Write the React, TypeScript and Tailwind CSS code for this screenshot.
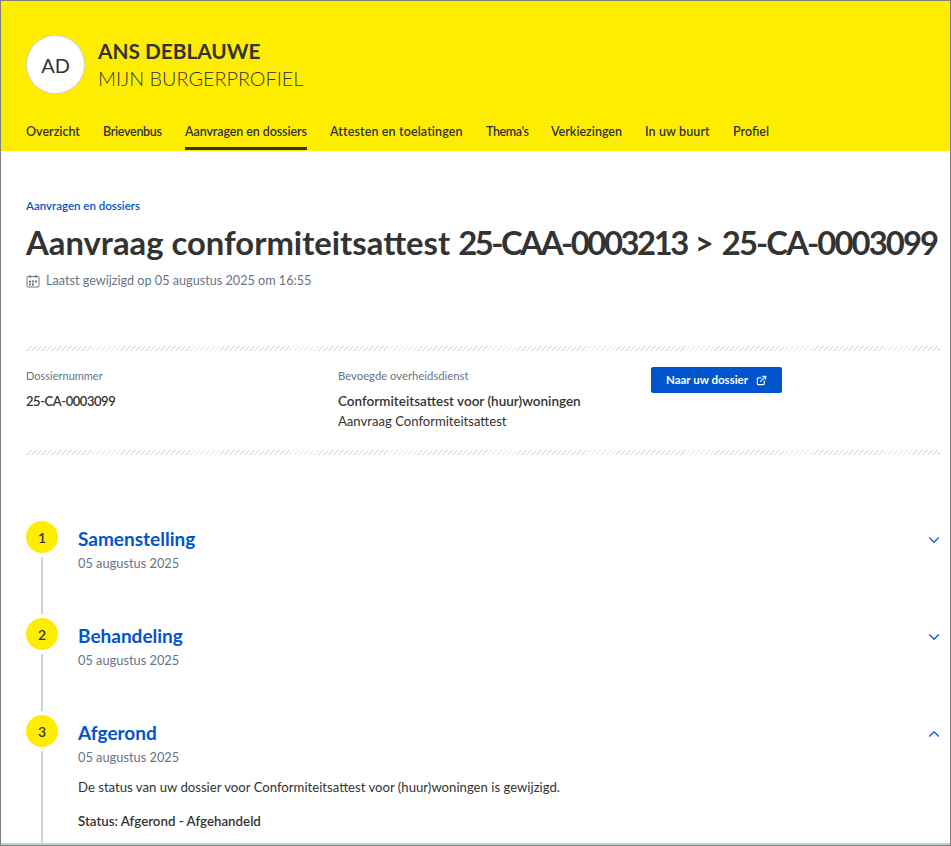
import { ChevronDown, ChevronUp, ExternalLink } from "lucide-react";

const navItems = [
  { label: "Overzicht", style: "w-[54px]" },
  { label: "Brievenbus", style: "w-[59px] tracking-[-0.3px]" },
  { label: "Aanvragen en dossiers", style: "w-[122px] tracking-[-0.1px]", active: true },
  { label: "Attesten en toelatingen", style: "w-[133px] tracking-[0.13px]" },
  { label: "Thema's", style: "w-[42px] tracking-[-0.4px]" },
  { label: "Verkiezingen", style: "w-[71px]" },
  { label: "In uw buurt", style: "w-[65px] tracking-[0.1px]" },
  { label: "Profiel", style: "w-[36px]" },
];

function Hatch() {
  return (
    <div className="h-[5px] bg-[repeating-linear-gradient(135deg,#e0e3e7_0px,#e0e3e7_1.2px,#ffffff_1.2px,#ffffff_3.5px)]" />
  );
}

function CalendarIcon() {
  return (
    <svg width="14" height="14" viewBox="0 0 14 14" fill="none" className="text-[#687483]">
      <rect x="1" y="2.5" width="12" height="10.5" rx="1" stroke="currentColor" />
      <path d="M4 1v3M10 1v3" stroke="currentColor" strokeWidth="1.2" />
      <path d="M3 6.5h2v2H3zM6 6.5h2v2H6zM9 6.5h2v2H9zM3 9.5h2v2H3zM6 9.5h2v2H6z" fill="currentColor" />
    </svg>
  );
}

type StepProps = {
  number: number;
  title: string;
  open?: boolean;
  last?: boolean;
  children?: React.ReactNode;
};

function Step({ number, title, open, last, children }: StepProps) {
  const Chevron = open ? ChevronUp : ChevronDown;
  return (
    <div className={last ? "flex gap-[20px]" : "flex h-[97px] gap-[20px]"}>
      <div className="flex w-[32px] shrink-0 flex-col items-center">
        <div className="flex size-[32px] shrink-0 items-center justify-center rounded-full bg-[#ffed00] text-[14px] font-semibold text-[#333332]">
          {number}
        </div>
        <div className="mt-[4px] mb-[4px] w-[2px] grow bg-[#cbd2da]" />
      </div>
      <div className="min-w-0 grow">
        <div className="flex items-start justify-between">
          <h2 className="mt-[6px] text-[19px] leading-[24px] font-bold text-[#0055cc]">{title}</h2>
          <Chevron className="mt-[10px] mr-[-3px] size-[18px] text-[#0055cc]" strokeWidth={1.5} />
        </div>
        <p className="mt-[3px] text-[12.8px] leading-[18px] text-[#687483]">05 augustus 2025</p>
        {children}
      </div>
    </div>
  );
}

export default function App() {
  return (
    <div className="flex h-[846px] w-[951px] flex-col overflow-hidden border border-[#808080] bg-white font-['Lato',sans-serif] text-[#333332]">
      <header className="h-[150px] shrink-0 bg-[#ffed00] px-[25px]">
        <div className="flex items-center gap-[13px] pt-[34px]">
          <div className="flex size-[59px] items-center justify-center rounded-full border border-[#cbd2da] bg-white text-[20px]">
            AD
          </div>
          <div>
            <div className="text-[20.8px] leading-[28px] font-bold">ANS DEBLAUWE</div>
            <div className="text-[19.8px] leading-[27px] font-light">MIJN BURGERPROFIEL</div>
          </div>
        </div>
        <nav className="mt-[21px] flex gap-[23px]">
          {navItems.map((item) => (
            <a
              key={item.label}
              className={
                item.active
                  ? `${item.style} h-[35px] border-b-[3px] border-[#333332] pt-[8px] text-[12.5px] leading-[18px] font-semibold whitespace-nowrap`
                  : `${item.style} h-[35px] pt-[8px] text-[12.5px] leading-[18px] font-semibold whitespace-nowrap`
              }
            >
              {item.label}
            </a>
          ))}
        </nav>
      </header>

      <main className="min-h-0 grow overflow-hidden px-[25px] pr-[10px]">
        <div className="mt-[47px] text-[11.5px] leading-[16px] font-semibold text-[#0055cc]">Aanvragen en dossiers</div>
        <h1 className="mt-[9px] text-[32.8px] leading-[40px] font-bold whitespace-nowrap">
          Aanvraag conformiteitsattest <span className="tracking-[-2.45px]">25-CAA-0003213</span> &gt;{" "}
          <span className="tracking-[-1.9px]">25-CA-0003099</span>
        </h1>
        <div className="mt-[9px] flex items-center gap-[6px] text-[12.65px] leading-[18px] text-[#687483]">
          <CalendarIcon />
          Laatst gewijzigd op 05 augustus 2025 om 16:55
        </div>

        <div className="mt-[56px]">
          <Hatch />
        </div>
        <div className="flex h-[99px] pt-[17px]">
          <div className="w-[312px]">
            <div className="text-[11px] leading-[16px] text-[#687483]">Dossiernummer</div>
            <div className="mt-[8px] text-[13px] leading-[18px] font-semibold tracking-[-0.45px]">25-CA-0003099</div>
          </div>
          <div className="w-[313px]">
            <div className="text-[11.3px] leading-[16px] text-[#687483]">Bevoegde overheidsdienst</div>
            <div className="mt-[8px] text-[13.5px] leading-[18px] font-semibold">Conformiteitsattest voor (huur)woningen</div>
            <div className="mt-[2px] text-[13.1px] leading-[18px]">Aanvraag Conformiteitsattest</div>
          </div>
          <div>
            <a className="-mt-px flex h-[26px] w-[131px] items-center justify-center gap-[8px] rounded-[2px] bg-[#0055cc] text-[11.5px] font-bold text-white">
              Naar uw dossier
              <ExternalLink className="size-[11px]" strokeWidth={2.5} />
            </a>
          </div>
        </div>
        <Hatch />

        <div className="mt-[66px]">
          <Step number={1} title="Samenstelling" />
          <Step number={2} title="Behandeling" />
          <Step number={3} title="Afgerond" open last>
            <p className="mt-[12px] text-[13.15px] leading-[18px]">
              De status van uw dossier voor Conformiteitsattest voor (huur)woningen is gewijzigd.
            </p>
            <p className="mt-[16px] text-[13.3px] leading-[18px] font-semibold">Status: Afgerond - Afgehandeld</p>
            <div className="h-[40px]" />
          </Step>
        </div>
      </main>
      <div className="h-[2px] shrink-0 bg-[#b9d6c8]" />
    </div>
  );
}
